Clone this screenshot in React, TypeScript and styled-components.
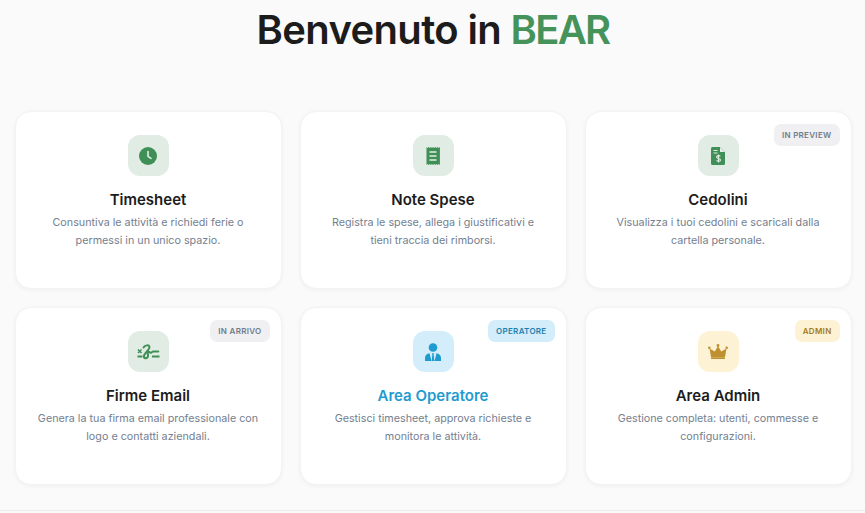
import React from "react";
import styled, { createGlobalStyle } from "styled-components";

const Global = createGlobalStyle`
  html, body { margin: 0; padding: 0; background: #fafafa; height: 100%; }
  body { font-family: Inter, "Noto Sans", sans-serif; overflow: hidden; }
`;

const Page = styled.main`
  width: 865px;
  height: 513px;
  box-sizing: border-box;
  padding: 0 13.5px 0 14.5px;
  display: flex;
  flex-direction: column;
  background: #fafafa;
`;

const Heading = styled.h1`
  margin: 0;
  height: 111px;
  padding-top: 5px;
  box-sizing: border-box;
  text-align: center;
  font-size: 40px;
  line-height: 50px;
  font-weight: 600;
  letter-spacing: -0.65px;
  color: #1c1c1c;
`;

const Accent = styled.span`
  color: #45925a;
  letter-spacing: -1.7px;
`;

const Grid = styled.section`
  display: grid;
  grid-template-columns: repeat(3, 1fr);
  grid-auto-rows: 178px;
  gap: 18px;
`;

const Card = styled.article`
  position: relative;
  box-sizing: border-box;
  padding-top: 23px;
  display: flex;
  flex-direction: column;
  align-items: center;
  background: #fff;
  border: 1px solid #f3f3f3;
  border-radius: 16px;
  box-shadow: 0 1px 4px rgba(0, 0, 0, 0.05);
`;

const IconBox = styled.div<{ $bg: string }>`
  width: 41px;
  height: 41px;
  border-radius: 12px;
  background: ${(p) => p.$bg};
  display: flex;
  align-items: center;
  justify-content: center;
`;

const Title = styled.h2<{ $color?: string }>`
  margin: 14px 0 0;
  font-size: 15px;
  line-height: 20px;
  font-weight: 600;
  color: ${(p) => p.$color ?? "#1c1c1c"};
`;

const Desc = styled.p`
  margin: 4px 0 0;
  width: 240px;
  text-align: center;
  font-size: 10.75px;
  line-height: 18px;
  font-weight: 400;
  color: #748090;
`;

const Badge = styled.span<{ $bg: string; $fg: string }>`
  position: absolute;
  top: 12px;
  right: 11px;
  height: 22px;
  padding: 0 8px;
  display: flex;
  align-items: center;
  border-radius: 7px;
  background: ${(p) => p.$bg};
  color: ${(p) => p.$fg};
  font-size: 8px;
  font-weight: 600;
  letter-spacing: 0.3px;
`;

const Footer = styled.div`
  margin-top: 25px;
  margin-left: -15px;
  margin-right: -14px;
  border-top: 1px solid #ececec;
`;

const GREEN = "#3f8f57";

const Clock = () => (
  <svg width="18" height="18" viewBox="0 0 18 18">
    <circle cx="9" cy="9" r="9" fill={GREEN} />
    <path d="M9 4.5V9.4l3 2" fill="none" stroke="#e3efe6" strokeWidth="1.6" strokeLinecap="round" strokeLinejoin="round" />
  </svg>
);

const Receipt = () => (
  <svg width="14" height="18" viewBox="0 0 14 18">
    <path
      d="M0.5 0l1.1 1 1.1-1 1.1 1 1.1-1 1.1 1L7 0l1.1 1 1.1-1 1.1 1 1.1-1 1.1 1 1.4-1v18l-1.4-1-1.1 1-1.1-1-1.1 1-1.1-1L7 18l-1.1-1-1.1 1-1.1-1-1.1 1-1.1-1L.5 18z"
      fill={GREEN}
    />
    <path d="M3.5 5h7M3.5 9h7M3.5 13h7" stroke="#e3efe6" strokeWidth="1.4" />
  </svg>
);

const FileDollar = () => (
  <svg width="14" height="18" viewBox="0 0 14 18">
    <path d="M1.5 0H9l5 5v11.5a1.5 1.5 0 0 1-1.5 1.5h-11A1.5 1.5 0 0 1 0 16.500V1.500A1.500 1.500 0 0 1 1.500 0z" fill={GREEN} />
    <path d="M9 0v5h5" fill="#e3efe6" />
    <path d="M2.500 3.500h4M2.500 6h4" stroke="#e3efe6" strokeWidth="1.1" />
    <path
      d="M9.300 9.300C8.900 8.800 8.300 8.600 7.500 8.600c-1.100 0-1.900.5-1.900 1.400 0 1.900 3.900 1 3.900 2.900 0 .9-.8 1.400-1.900 1.400-.9 0-1.600-.3-2-.9M7.500 7.600v8"
      fill="none"
      stroke="#e3efe6"
      strokeWidth="1.100"
    />
  </svg>
);

const Signature = () => (
  <svg width="23" height="16" viewBox="0 0 23 16">
    <path d="M1 5.500l3.500 3.500M4.500 5.500L1 9" stroke={GREEN} strokeWidth="1.500" />
    <path d="M0.500 12.500h5M15 12.500h7.500" stroke={GREEN} strokeWidth="1.900" />
    <path
      d="M6.500 3.500C8 1 12 .5 12.500 3c.4 2.500-5 5.500-5.500 9 -.3 2.500 2.800 3 3.800.8.9-2-1-4.500.2-5.300 1-.6 1.500 1.500 2.800 1.300 1.300-.2 1.200-1.300 2.500-1.300h5"
      fill="none"
      stroke={GREEN}
      strokeWidth="2"
      strokeLinecap="round"
    />
  </svg>
);

const Operator = () => (
  <svg width="16" height="18" viewBox="0 0 16 18" fill="#1f9bd1">
    <circle cx="8" cy="4.500" r="4.300" />
    <path d="M0 18v-3c0-3 2.500-4.500 4.500-4.800L6.500 18zM16 18v-3c0-3-2.500-4.500-4.500-4.800L9.500 18zM7 10.300h2l-.3 1.500.6 6.200H6.700l.6-6.200z" />
  </svg>
);

const Crown = () => (
  <svg width="20" height="15" viewBox="0 0 20 15" fill="#bf9030">
    <circle cx="10" cy="1.500" r="1.400" />
    <circle cx="1.300" cy="3.800" r="1.300" />
    <circle cx="18.700" cy="3.800" r="1.300" />
    <path d="M10 2l3.200 5.500L18.500 4.500 17 13H3L1.500 4.500l5.300 3z" />
    <rect x="3" y="13.300" width="14" height="1.700" rx=".4" />
  </svg>
);

type Item = {
  title: string;
  desc: string[];
  icon: React.ReactNode;
  iconBg: string;
  titleColor?: string;
  badge?: { text: string; bg: string; fg: string };
};

const greenBg = "#e1ede4";
const greyBadge = { bg: "#f0f0f2", fg: "#6f7c8c" };

const items: Item[] = [
  { title: "Timesheet", desc: ["Consuntiva le attività e richiedi ferie o", "permessi in un unico spazio."], icon: <Clock />, iconBg: greenBg },
  { title: "Note Spese", desc: ["Registra le spese, allega i giustificativi e", "tieni traccia dei rimborsi."], icon: <Receipt />, iconBg: greenBg },
  { title: "Cedolini", desc: ["Visualizza i tuoi cedolini e scaricali dalla", "cartella personale."], icon: <FileDollar />, iconBg: greenBg, badge: { text: "IN PREVIEW", ...greyBadge } },
  { title: "Firme Email", desc: ["Genera la tua firma email professionale con", "logo e contatti aziendali."], icon: <Signature />, iconBg: greenBg, badge: { text: "IN ARRIVO", ...greyBadge } },
  { title: "Area Operatore", desc: ["Gestisci timesheet, approva richieste e", "monitora le attività."], icon: <Operator />, iconBg: "#d3edfa", titleColor: "#1f9bd1", badge: { text: "OPERATORE", bg: "#d3edfa", fg: "#1d7fae" } },
  { title: "Area Admin", desc: ["Gestione completa: utenti, commesse e", "configurazioni."], icon: <Crown />, iconBg: "#fdf2d3", badge: { text: "ADMIN", bg: "#fdf2d3", fg: "#a47a22" } },
];

export default function App() {
  return (
    <>
      <Global />
      <Page>
        <Heading>
          Benvenuto in <Accent>BEAR</Accent>
        </Heading>
        <Grid>
          {items.map((it) => (
            <Card key={it.title}>
              {it.badge && (
                <Badge $bg={it.badge.bg} $fg={it.badge.fg}>
                  {it.badge.text}
                </Badge>
              )}
              <IconBox $bg={it.iconBg}>{it.icon}</IconBox>
              <Title $color={it.titleColor}>{it.title}</Title>
              <Desc>
                {it.desc[0]}
                <br />
                {it.desc[1]}
              </Desc>
            </Card>
          ))}
        </Grid>
        <Footer />
      </Page>
    </>
  );
}
